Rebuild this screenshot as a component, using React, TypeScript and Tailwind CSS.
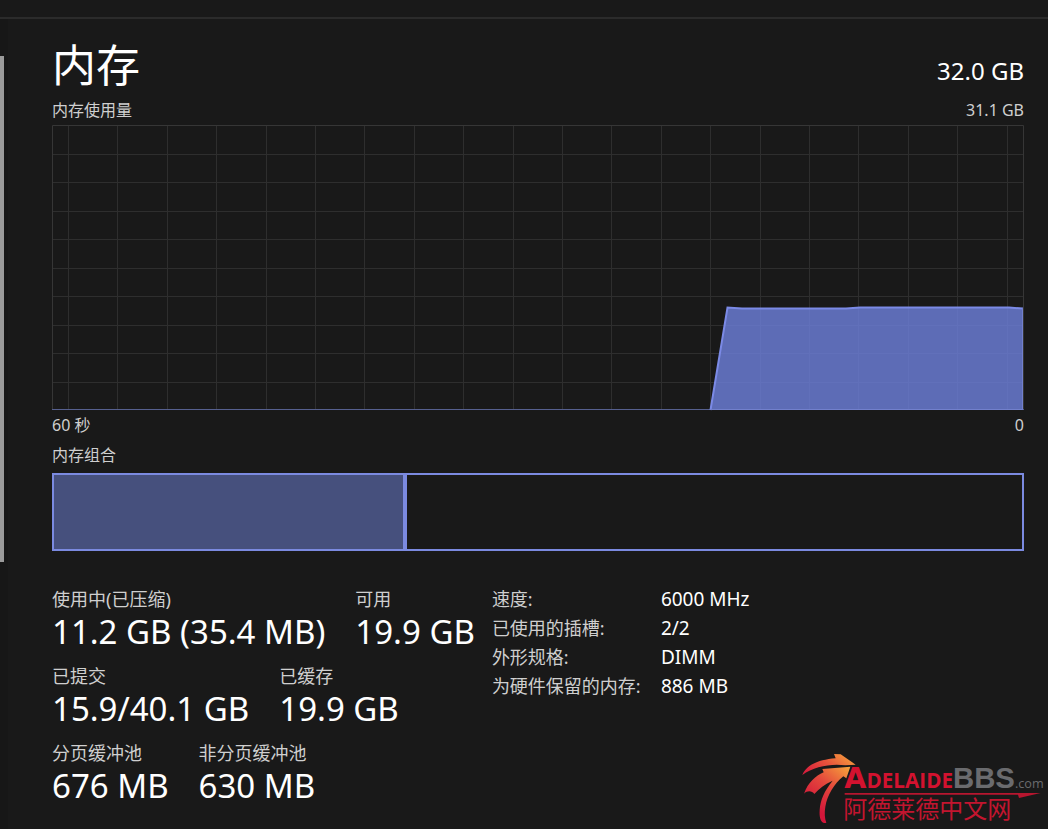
import React from "react";

const latin = "font-['Noto_Sans','Noto_Sans_CJK_SC',sans-serif]";

const statRows = [
  [
    { label: "使用中(已压缩)", value: "11.2 GB (35.4 MB)" },
    { label: "可用", value: "19.9 GB" },
  ],
  [
    { label: "已提交", value: "15.9/40.1 GB" },
    { label: "已缓存", value: "19.9 GB" },
  ],
  [
    { label: "分页缓冲池", value: "676 MB" },
    { label: "非分页缓冲池", value: "630 MB" },
  ],
];

const specs = [
  ["速度:", "6000 MHz"],
  ["已使用的插槽:", "2/2"],
  ["外形规格:", "DIMM"],
  ["为硬件保留的内存:", "886 MB"],
];

const verticals = Array.from({ length: 20 }, (_, i) => Math.round(16 + i * 49.4) + 0.5);
const horizontals = Array.from({ length: 9 }, (_, i) => Math.round((i + 1) * 28.5) + 0.5);

function UsageChart() {
  return (
    <svg
      className="block h-[286px] w-full"
      viewBox="0 0 972 286"
      preserveAspectRatio="none"
      role="img"
      aria-label="内存使用量"
    >
      <g stroke="#2e2e2e" strokeWidth="1" fill="none">
        {verticals.map((x) => (
          <path key={x} d={`M${x} 0V285`} vectorEffect="non-scaling-stroke" />
        ))}
        {horizontals.map((y) => (
          <path key={y} d={`M0 ${y}H972`} vectorEffect="non-scaling-stroke" />
        ))}
        <path d="M0.5 285V0.5H971.5V285" stroke="#363636" vectorEffect="non-scaling-stroke" />
      </g>
      <path d="M0 284.5H972" stroke="#56608f" strokeWidth="1" vectorEffect="non-scaling-stroke" />
      <path
        d="M658.5 285L675.5 182.5L690 183.5H794L808 182.5H957L971 183.5V285Z"
        fill="#6d7fd9"
        fillOpacity="0.82"
      />
      <path
        d="M658.5 285L675.5 182.5L690 183.5H794L808 182.5H957L971 183.5"
        fill="none"
        stroke="#7b8ae6"
        strokeWidth="2"
        vectorEffect="non-scaling-stroke"
      />
      <path d="M658.5 284.5H970.5V183" fill="none" stroke="#7280cc" vectorEffect="non-scaling-stroke" />
    </svg>
  );
}

function SiteLogo() {
  return (
    <svg
      className="absolute right-0 bottom-0 h-[89px] w-[258px]"
      viewBox="0 0 774 267"
      role="img"
      aria-label="AdelaideBBS.com 阿德莱德中文网"
    >
      <defs>
        <linearGradient id="flame" x1="0" y1="0.7" x2="1" y2="0.2">
          <stop offset="0" stopColor="#d81f3c" />
          <stop offset="0.5" stopColor="#e8553c" />
          <stop offset="1" stopColor="#f6a23c" />
        </linearGradient>
        <linearGradient id="leg" gradientUnits="userSpaceOnUse" x1="75" y1="205" x2="175" y2="80">
          <stop offset="0" stopColor="#d3163a" />
          <stop offset="0.5" stopColor="#e4483c" />
          <stop offset="1" stopColor="#f6a23c" />
        </linearGradient>
      </defs>
      <path
        d="M37 105C46 80 76 60 137 55L132 42L152 43L197 74L166 76C122 70 72 80 37 105Z"
        fill="url(#flame)"
      />
      <path
        d="M42 161C54 128 76 108 101 97L97 87L181 80L169 115L160 109C132 132 112 165 106 200C103 216 104 235 109 248C94 254 87 235 89 210C91 180 103 152 128 122C104 132 87 146 73 162C66 152 52 151 42 161Z"
        fill="url(#leg)"
      />
      <text x="163" y="145" fontWeight="700" fill="#d3122f">
        <tspan fontSize="86" className="font-['DejaVu_Sans',sans-serif]">A</tspan>
        <tspan fontSize="62" className="font-['Open_Sans',sans-serif]">DELAIDE</tspan>
        <tspan fontSize="88" fill="#6a6b6e" className="font-['Liberation_Sans',sans-serif]">BBS</tspan>
        <tspan fontSize="38" fontWeight="400" fill="#6a6b6e" className="font-['Open_Sans',sans-serif]">.com</tspan>
      </text>
      <path d="M164 159H752L687 174L684 164H164Z" fill="#b7162f" />
      <text x="160" y="234" fontSize="72" fill="#c3152f" className="font-['Liberation_Sans','Noto_Sans_CJK_SC',sans-serif]">
        阿德莱德中文网
      </text>
    </svg>
  );
}

export default function App() {
  return (
    <div className={`relative flex min-h-screen flex-col bg-[#191919] text-[#cfcfcf] ${latin}`}>
      <header className="h-[19px] border-b-2 border-[#2b2b2b]" />
      <div className="flex flex-1">
        <aside className="w-2 bg-[#171717] pt-[37px]">
          <div className="h-[506px] w-1 bg-[#9b9b9b]" />
        </aside>
        <main className="min-w-0 flex-1 pt-4 pr-6 pl-11">
          <div className="flex items-end justify-between text-white">
            <h1 className="text-[44px] leading-[60px] font-normal">内存</h1>
            <span className="text-2xl leading-[48px]">32.0 GB</span>
          </div>
          <div className="flex justify-between py-[3px] text-base leading-6">
            <span>内存使用量</span>
            <span>31.1 GB</span>
          </div>
          <UsageChart />
          <div className="flex justify-between pt-[2px] text-base leading-6">
            <span>60 秒</span>
            <span>0</span>
          </div>
          <h2 className="pt-[6px] pb-[6px] text-base leading-6 font-normal">内存组合</h2>
          <div className="flex h-[78px]">
            <div className="w-[36.3%] border-2 border-[#7b8ae0] bg-[#46507d]" />
            <div className="flex-1 border-2 border-[#7b8ae0]" />
          </div>
          <div className="flex gap-[17px] pt-[34px]">
            <div className="flex flex-col gap-[11px] pt-[2px]">
              {statRows.map((row, i) => (
                <dl key={i} className="flex gap-[30px]">
                  {row.map((s) => (
                    <div key={s.label}>
                      <dt className="text-lg leading-6">{s.label}</dt>
                      <dd className="text-[33px] leading-[42px] whitespace-nowrap text-white">{s.value}</dd>
                    </div>
                  ))}
                </dl>
              ))}
            </div>
            <table className="self-start text-left">
              <tbody>
                {specs.map(([label, value]) => (
                  <tr key={label}>
                    <th className="w-[169px] p-0 text-lg leading-[29px] font-normal whitespace-nowrap">{label}</th>
                    <td className="p-0 text-[19px] leading-[29px] whitespace-nowrap text-white">{value}</td>
                  </tr>
                ))}
              </tbody>
            </table>
          </div>
        </main>
      </div>
      <SiteLogo />
    </div>
  );
}
